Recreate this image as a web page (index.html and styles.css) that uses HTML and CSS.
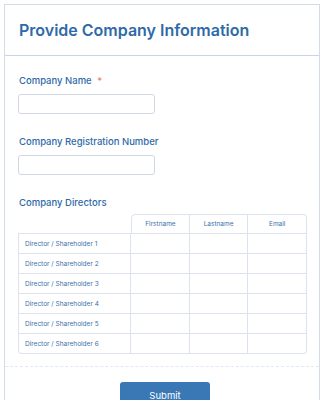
FILE: index.html
```html
<!DOCTYPE html>
<html lang="en">
<head>
    <meta charset="UTF-8">
    <meta name="viewport" content="width=device-width, initial-scale=1.0">
    <title>Provide Company Information</title>
    <link rel="stylesheet" href="styles.css">
</head>
<body>

<div class="form-card">
    <div class="form-header">
        <h1>Provide Company Information</h1>
    </div>

    <div class="form-body">
        <div class="field">
            <label for="company-name">Company Name <span class="required">*</span></label>
            <input type="text" id="company-name">
        </div>

        <div class="field">
            <label for="company-reg">Company Registration Number</label>
            <input type="text" id="company-reg">
        </div>

        <div class="field">
            <span class="field-label">Company Directors</span>
            <table class="matrix">
                <thead>
                    <tr>
                        <th class="corner"></th>
                        <th>Firstname</th>
                        <th>Lastname</th>
                        <th>Email</th>
                    </tr>
                </thead>
                <tbody>
                    <tr><td class="row-label">Director / Shareholder 1</td><td></td><td></td><td></td></tr>
                    <tr><td class="row-label">Director / Shareholder 2</td><td></td><td></td><td></td></tr>
                    <tr><td class="row-label">Director / Shareholder 3</td><td></td><td></td><td></td></tr>
                    <tr><td class="row-label">Director / Shareholder 4</td><td></td><td></td><td></td></tr>
                    <tr><td class="row-label">Director / Shareholder 5</td><td></td><td></td><td></td></tr>
                    <tr><td class="row-label">Director / Shareholder 6</td><td></td><td></td><td></td></tr>
                </tbody>
            </table>
        </div>
    </div>

    <div class="form-footer">
        <button type="submit" class="submit-btn">Submit</button>
    </div>
</div>

</body>
</html>
```

FILE: styles.css
```css
body {
    font-family: Inter, "Noto Sans", sans-serif;
    margin: 0;
    padding: 4px 0 0 4px;
    background: #ffffff;
    color: #2f6aa8;
}
.form-card {
    width: 314px;
    border: 1px solid #d3dcea;
    border-bottom: none;
    background: #ffffff;
}
.form-header {
    height: 50px;
    padding: 0 14px;
    display: flex;
    align-items: center;
    border-bottom: 1px solid #c8d4e6;
}
.form-header h1 {
    margin: 0;
    font-size: 16px;
    font-weight: 600;
    color: #2f6aa8;
}
.form-body {
    padding: 19px 14px 12px 13px;
}
.field {
    margin-bottom: 22px;
}
.field:last-child {
    margin-bottom: 0;
}
.field label,
.field-label {
    display: block;
    font-size: 9.5px;
    font-weight: 500;
    color: #2f6aa8;
    margin-bottom: 8px;
    padding-left: 1px;
}
.required {
    color: #f07c7c;
    margin-left: 3px;
}
.field input {
    display: block;
    width: 137px;
    height: 20px;
    box-sizing: border-box;
    border: 1px solid #cfd7e4;
    border-radius: 3px;
    margin: 0;
}
.matrix {
    width: 289px;
    border-collapse: separate;
    border-spacing: 0;
    margin-top: -2px;
}
.matrix th,
.matrix td {
    height: 20px;
    box-sizing: border-box;
    padding: 0;
    border-right: 1px solid #dde3ee;
    border-bottom: 1px solid #dde3ee;
    font-size: 6.5px;
    font-weight: 400;
    color: #3a6fac;
}
.matrix th {
    border-top: 1px solid #dde3ee;
    width: 58px;
    text-align: center;
}
.matrix th:nth-child(2) {
    border-left: 1px solid #dde3ee;
    border-top-left-radius: 4px;
}
.matrix th:last-child {
    border-top-right-radius: 4px;
}
.matrix th.corner {
    width: 112px;
    border: none;
    border-bottom: 1px solid #dde3ee;
}
.matrix td.row-label {
    border-left: 1px solid #dde3ee;
    padding-left: 6px;
    text-align: left;
}
.matrix tbody tr:last-child td.row-label {
    border-bottom-left-radius: 4px;
}
.matrix tbody tr:last-child td:last-child {
    border-bottom-right-radius: 4px;
}
.form-footer {
    border-top: 1px dashed #e3e8f1;
    padding: 15px 0 0 6px;
    display: flex;
    justify-content: center;
}
.submit-btn {
    width: 90px;
    height: 26px;
    background: #3a78b5;
    color: #ffffff;
    border: none;
    border-radius: 3px;
    font-family: Inter, "Noto Sans", sans-serif;
    font-size: 9.5px;
}
```
